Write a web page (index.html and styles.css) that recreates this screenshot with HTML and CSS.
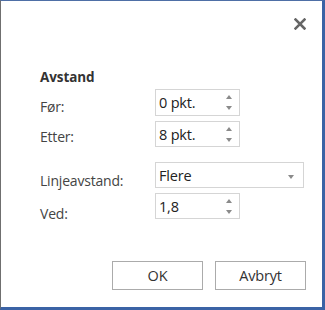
FILE: index.html
```html
<!DOCTYPE html>
<html>
<head>
<meta charset="utf-8">
<link rel="stylesheet" href="styles.css">
</head>
<body>
<div class="dialog">
  <div class="titlebar">
    <button class="close" aria-label="Lukk">
      <svg width="12" height="12" viewBox="0 0 12 12"><path d="M1.5 1.5 L10.5 10.5 M10.5 1.5 L1.5 10.5" stroke="#666" stroke-width="2.5" stroke-linecap="square"/></svg>
    </button>
  </div>
  <div class="content">
    <div class="heading">Avstand</div>
    <div class="row r1">
      <span class="label">Før:</span>
      <div class="field spin"><span class="val">0 pkt.</span><span class="arrows"><i class="up"></i><i class="down"></i></span></div>
    </div>
    <div class="row r2">
      <span class="label">Etter:</span>
      <div class="field spin"><span class="val">8 pkt.</span><span class="arrows"><i class="up"></i><i class="down"></i></span></div>
    </div>
    <div class="row r3">
      <span class="label">Linjeavstand:</span>
      <div class="field select"><span class="val">Flere</span><span class="arrows"><i class="down"></i></span></div>
    </div>
    <div class="row r4">
      <span class="label">Ved:</span>
      <div class="field spin"><span class="val">1,8</span><span class="arrows"><i class="up"></i><i class="down"></i></span></div>
    </div>
  </div>
  <div class="buttons">
    <button class="btn">OK</button>
    <button class="btn">Avbryt</button>
  </div>
</div>
</body>
</html>
```

FILE: styles.css
```css
html, body {
  margin: 0;
  padding: 0;
  background: #ffffff;
}
body {
  width: 325px;
  height: 310px;
  font-family: "Open Sans", "Noto Sans", sans-serif;
}
.dialog {
  box-sizing: border-box;
  width: 325px;
  height: 310px;
  background: #ffffff;
  border-top: 1px solid #4e6fa6;
  border-left: 1px solid #6f6f6f;
  border-right: 3px solid #3b63a5;
  border-bottom: 3px solid #3b63a5;
  display: flex;
  flex-direction: column;
}
.titlebar {
  display: flex;
  justify-content: flex-end;
  padding: 17px 16px 0 0;
  height: 20px;
}
.close {
  border: none;
  background: none;
  padding: 0;
  width: 12px;
  height: 12px;
  display: flex;
}
.content {
  padding: 30px 0 0 39px;
  display: flex;
  flex-direction: column;
}
.heading {
  font-weight: 700;
  font-size: 13.5px;
  color: #333;
  line-height: 18px;
  height: 18px;
  letter-spacing: -0.1px;
}
.row {
  display: flex;
  align-items: flex-start;
  height: 26px;
}
.label {
  width: 115px;
  height: 18px;
  font-size: 14px;
  color: #444;
  line-height: 18px;
  letter-spacing: -0.2px;
}
.r1 .label { margin-top: 8.5px; }
.r2 .label { margin-top: 7px; }
.r3 .label { margin-top: 10px; }
.r4 .label { margin-top: 12px; }
.field {
  box-sizing: border-box;
  height: 26px;
  border: 1px solid #d5d5d5;
  display: flex;
  align-items: center;
  justify-content: space-between;
  padding: 0 7px 0 3px;
  font-size: 14.5px;
  color: #222;
  letter-spacing: -0.2px;
}
.r1 { height: 27px; margin-top: 3px; }
.r1 .field { height: 27px; }
.spin { width: 85px; }
.select { width: 149px; }
.r2 { margin-top: 5px; }
.r3 { margin-top: 15px; }
.r4 { margin-top: 5px; }
.arrows {
  display: flex;
  flex-direction: column;
  gap: 7px;
  align-items: center;
}
.arrows i {
  display: block;
  width: 0;
  height: 0;
  border-left: 3px solid transparent;
  border-right: 3px solid transparent;
}
.arrows .up { border-bottom: 4px solid #8a8a8a; }
.arrows .down { border-top: 4px solid #8a8a8a; }
.select .arrows { padding-top: 3px; padding-right: 2px; }
.buttons {
  display: flex;
  justify-content: flex-end;
  gap: 12px;
  padding: 42px 16px 0 0;
}
.btn {
  box-sizing: border-box;
  width: 91px;
  height: 29px;
  background: #ffffff;
  border: 1px solid #ababab;
  font-family: "Open Sans", "Noto Sans", sans-serif;
  font-size: 14.5px;
  color: #333;
  padding: 0;
  letter-spacing: -0.2px;
}
```
